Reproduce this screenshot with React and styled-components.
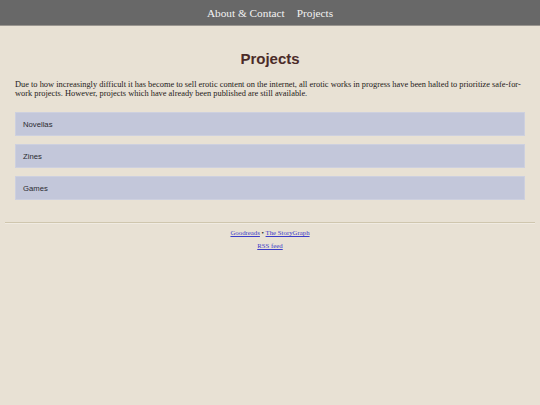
import React from 'react';
import styled, { createGlobalStyle } from 'styled-components';

const GlobalStyle = createGlobalStyle`
  html, body {
    margin: 0;
    padding: 0;
    background: #e8e1d4;
  }
  body {
    font-family: "Liberation Serif", "Times New Roman", serif;
  }
`;

const Nav = styled.nav`
  height: 25px;
  background: #686868;
  border-bottom: 1px solid #9a9690;
  display: flex;
  justify-content: center;
  align-items: center;
  gap: 12px;
`;

const NavLink = styled.a`
  color: #f2f2f2;
  font-size: 11.3px;
  text-decoration: none;
  font-family: "Liberation Serif", "Times New Roman", serif;
`;

const Main = styled.main`
  padding: 0 15px;
`;

const Title = styled.h1`
  margin: 0;
  padding-top: 24px;
  text-align: center;
  font-family: "Liberation Sans", Arial, sans-serif;
  font-weight: bold;
  font-size: 15px;
  line-height: 18px;
  color: #4b2b28;
`;

const Intro = styled.p`
  margin: 12px 0 0;
  font-size: 8.4px;
  line-height: 9px;
  color: #1e1a18;
`;

const Sections = styled.div`
  margin-top: 14px;
  display: flex;
  flex-direction: column;
  gap: 8px;
`;

const Section = styled.div`
  height: 22px;
  background: #c3c7da;
  border: 1px solid #cdd0df;
  display: flex;
  align-items: center;
  padding-left: 7px;
  font-family: "Liberation Sans", Arial, sans-serif;
  font-size: 7.7px;
  color: #2a2a30;
`;

const Rule = styled.hr`
  margin: 22px 5px 0;
  border: 0;
  border-top: 1px solid #cfc6ae;
  border-bottom: 1px solid #f0ebe2;
`;

const Footer = styled.footer`
  text-align: center;
  font-size: 6.8px;
  padding-top: 5px;
`;

const FooterLine = styled.div`
  line-height: 8px;
  margin-bottom: ${p => p.gap || 0}px;
  color: #222;
`;

const FooterLink = styled.a`
  color: #3c3cc8;
  text-decoration: underline;
`;

export default function App() {
  const sections = ['Novellas', 'Zines', 'Games'];
  return (
    <>
      <GlobalStyle />
      <Nav>
        <NavLink href="#">About &amp; Contact</NavLink>
        <NavLink href="#">Projects</NavLink>
      </Nav>
      <Main>
        <Title>Projects</Title>
        <Intro>
          Due to how increasingly difficult it has become to sell erotic content on the internet, all erotic works in progress have been halted to prioritize safe-for-work projects. However, projects which have already been published are still available.
        </Intro>
        <Sections>
          {sections.map(s => (
            <Section key={s}>{s}</Section>
          ))}
        </Sections>
      </Main>
      <Rule />
      <Footer>
        <FooterLine gap={5}>
          <FooterLink href="#">Goodreads</FooterLink> • <FooterLink href="#">The StoryGraph</FooterLink>
        </FooterLine>
        <FooterLine>
          <FooterLink href="#">RSS feed</FooterLink>
        </FooterLine>
      </Footer>
    </>
  );
}
